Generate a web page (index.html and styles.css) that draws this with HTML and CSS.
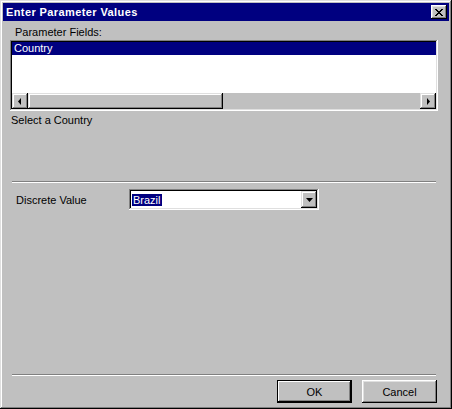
FILE: index.html
```html
<!DOCTYPE html>
<html lang="en">
<head>
    <meta charset="UTF-8">
    <title>Enter Parameter Values</title>
    <link rel="stylesheet" href="styles.css">
</head>
<body>
    <div class="window">
        <div class="title-bar">
            <span class="title">Enter Parameter Values</span>
            <button class="close-btn">
                <svg width="8" height="7" viewBox="0 0 8 7"><path d="M0 0h2v1h1v1h2V1h1V0h2v1H7v1H6v1H5v1h1v1h1v1h1v1H6V6H5V5H3v1H2v1H0V6h1V5h1V4h1V3H2V2H1V1H0z" fill="#000"/></svg>
            </button>
        </div>
        <div class="content">
            <div class="label">Parameter Fields:</div>
            <div class="listbox">
                <div class="list-items">
                    <div class="list-item selected">Country</div>
                </div>
                <div class="hscroll">
                    <div class="scroll-btn">
                        <svg width="4" height="7" viewBox="0 0 4 7"><path d="M3 0v7L0 3.5z" fill="#000"/></svg>
                    </div>
                    <div class="scroll-thumb"></div>
                    <div class="scroll-track"></div>
                    <div class="scroll-btn">
                        <svg width="4" height="7" viewBox="0 0 4 7"><path d="M1 0v7l3-3.5z" fill="#000"/></svg>
                    </div>
                </div>
            </div>
            <div class="prompt">Select a Country</div>
            <div class="separator sep-top"></div>
            <div class="value-row">
                <span class="value-label">Discrete Value</span>
                <div class="combo">
                    <span class="combo-text"><span class="sel">Brazil</span></span>
                    <div class="combo-btn">
                        <svg width="7" height="4" viewBox="0 0 7 4"><path d="M0 0h7L3.5 4z" fill="#000"/></svg>
                    </div>
                </div>
            </div>
            <div class="spacer"></div>
            <div class="separator"></div>
            <div class="buttons">
                <button class="btn default">OK</button>
                <button class="btn">Cancel</button>
            </div>
        </div>
    </div>
</body>
</html>
```

FILE: styles.css
```css
body {
    margin: 0;
    font-family: "Liberation Sans", Arial, sans-serif;
    font-size: 11px;
    background: #c0c0c0;
}
.window {
    width: 452px;
    height: 409px;
    box-sizing: border-box;
    padding: 3px;
    background: #c0c0c0;
    display: flex;
    flex-direction: column;
    box-shadow: inset -1px -1px #000, inset 1px 1px #dfdfdf, inset -2px -2px #808080, inset 2px 2px #fff;
}
.title-bar {
    height: 18px;
    background: #000080;
    color: #fff;
    display: flex;
    align-items: center;
    justify-content: space-between;
    padding: 0 2px 0 3px;
}
.title {
    font-weight: bold;
    font-size: 11px;
    letter-spacing: 0.4px;
}
.close-btn {
    width: 16px;
    height: 14px;
    padding: 0;
    border: none;
    background: #c0c0c0;
    display: flex;
    align-items: center;
    justify-content: center;
    box-shadow: inset -1px -1px #000, inset 1px 1px #fff, inset -2px -2px #808080, inset 2px 2px #dfdfdf;
}
.content {
    flex: 1;
    display: flex;
    flex-direction: column;
    padding: 5px 11px 3px 7px;
}
.label {
    padding-left: 5px;
    height: 13px;
    line-height: 13px;
}
.listbox {
    margin-top: 1px;
    height: 71px;
    box-sizing: border-box;
    background: #fff;
    padding: 2px;
    display: flex;
    flex-direction: column;
    box-shadow: inset -1px -1px #fff, inset 1px 1px #808080, inset -2px -2px #dfdfdf, inset 2px 2px #000;
}
.list-items {
    flex: 1;
}
.list-item {
    height: 13px;
    line-height: 13px;
    padding-left: 2px;
}
.list-item.selected {
    background: #000080;
    color: #fff;
}
.hscroll {
    height: 16px;
    display: flex;
    background: #c0c0c0;
}
.scroll-btn, .scroll-thumb {
    background: #c0c0c0;
    box-shadow: inset -1px -1px #000, inset 1px 1px #dfdfdf, inset -2px -2px #808080, inset 2px 2px #fff;
}
.scroll-btn {
    width: 16px;
    display: flex;
    align-items: center;
    justify-content: center;
}
.scroll-thumb {
    width: 195px;
}
.scroll-track {
    flex: 1;
    background: #c0c0c0;
}
.prompt {
    margin-top: 3px;
    padding-left: 1px;
    height: 13px;
    line-height: 13px;
}
.separator {
    height: 2px;
    margin: 0 2px;
    border-top: 1px solid #808080;
    border-bottom: 1px solid #fff;
    box-sizing: border-box;
}
.sep-top {
    margin-top: 54px;
}
.value-row {
    display: flex;
    align-items: center;
    margin-top: 6px;
    padding-left: 6px;
}
.value-label {
    width: 113px;
}
.combo {
    width: 190px;
    height: 21px;
    box-sizing: border-box;
    background: #fff;
    padding: 2px;
    display: flex;
    align-items: center;
    box-shadow: inset -1px -1px #fff, inset 1px 1px #808080, inset -2px -2px #dfdfdf, inset 2px 2px #000;
}
.combo-text {
    flex: 1;
    padding-left: 1px;
}
.sel {
    background: #000080;
    color: #fff;
    padding: 0 1px;
}
.combo-btn {
    width: 16px;
    height: 17px;
    background: #c0c0c0;
    display: flex;
    align-items: center;
    justify-content: center;
    box-shadow: inset -1px -1px #000, inset 1px 1px #dfdfdf, inset -2px -2px #808080, inset 2px 2px #fff;
}
.spacer {
    flex: 1;
}
.buttons {
    display: flex;
    justify-content: flex-end;
    gap: 10px;
    margin-top: 4px;
    padding-right: 1px;
}
.btn {
    width: 75px;
    height: 23px;
    font-family: "Liberation Sans", Arial, sans-serif;
    font-size: 11px;
    color: #000;
    background: #c0c0c0;
    border: none;
    padding: 0;
    box-shadow: inset -1px -1px #000, inset 1px 1px #fff, inset -2px -2px #808080, inset 2px 2px #dfdfdf;
}
.btn.default {
    box-shadow: inset -1px -1px #000, inset 1px 1px #000, inset -2px -2px #000, inset 2px 2px #fff, inset -3px -3px #808080;
}
```
